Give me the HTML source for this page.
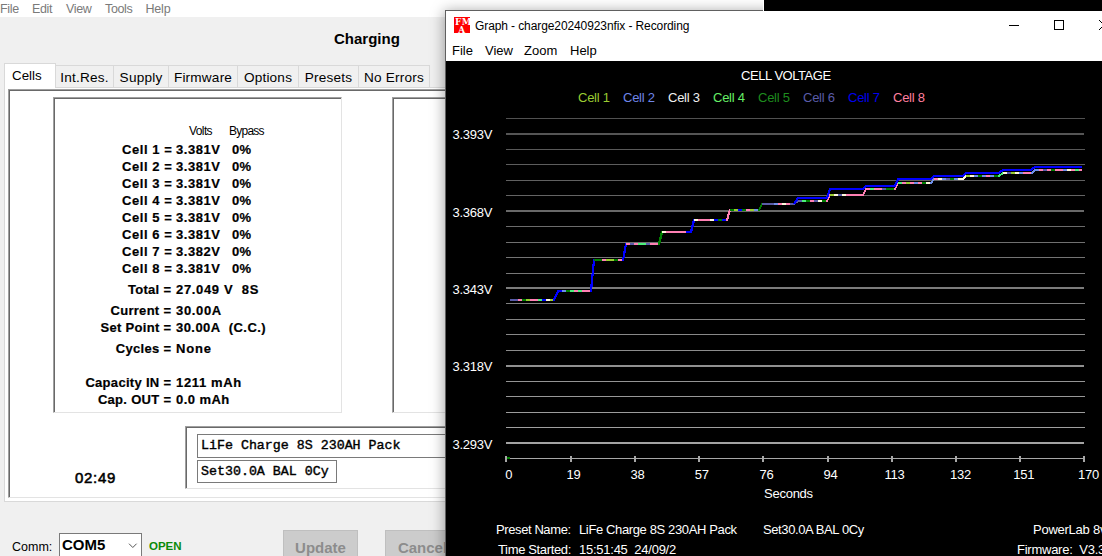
<!DOCTYPE html>
<html><head><meta charset="utf-8">
<style>
html,body{margin:0;padding:0;}
body{width:1102px;height:556px;overflow:hidden;position:relative;background:#f0f0f0;font-family:"Liberation Sans",sans-serif;color:#000;}
.a{position:absolute;white-space:nowrap;}
.menu{font-size:12.5px;color:#7a7a7a;top:1px;line-height:17px;letter-spacing:-0.35px;}
.tab{top:66px;height:21px;border-right:1px solid #d9d9d9;font-size:13.6px;letter-spacing:0.2px;line-height:23px;text-align:center;box-sizing:border-box;background:#f0f0f0;}
.cell{font-weight:bold;font-size:13px;letter-spacing:0.3px;line-height:17px;-webkit-text-stroke:0.2px #000;}
.v{letter-spacing:0.55px}
.sk{background:#fff;border:1px solid #a0a0a0;border-right-color:#e3e3e3;border-bottom-color:#e3e3e3;box-shadow:inset 1px 1px 0 #696969;box-sizing:border-box}
.g{color:#fff;font-size:13px;letter-spacing:-0.25px;}
.xl{top:466px;line-height:17px;transform:translateX(-50%);}
</style></head><body>
<!-- main window -->
<div class="a" style="left:0;top:0;width:763px;height:17px;background:#fff"></div>
<div class="a menu" style="left:0px">File</div>
<div class="a menu" style="left:32px">Edit</div>
<div class="a menu" style="left:66px">View</div>
<div class="a menu" style="left:105px">Tools</div>
<div class="a menu" style="left:145.5px;letter-spacing:-0.2px">Help</div>
<div class="a" style="left:334px;top:29.5px;font-size:15px;font-weight:bold;line-height:18px">Charging</div>

<!-- tabs -->
<div class="a" style="left:55px;top:65px;width:375px;height:1px;background:#d9d9d9"></div>
<div class="a tab" style="left:56px;width:58px">Int.Res.</div>
<div class="a tab" style="left:114px;width:55px">Supply</div>
<div class="a tab" style="left:169px;width:69px">Firmware</div>
<div class="a tab" style="left:238px;width:61px">Options</div>
<div class="a tab" style="left:299px;width:60px">Presets</div>
<div class="a tab" style="left:359px;width:71px">No Errors</div>
<div class="a" style="left:4px;top:87px;width:770px;height:415px;background:#fff;border:1px solid #d9d9d9;box-sizing:border-box"></div>
<div class="a" style="left:4px;top:63px;width:52px;height:25px;border:1px solid #d9d9d9;border-bottom:none;background:#fff;box-sizing:border-box;font-size:13.33px;line-height:23px;text-align:left;padding-left:7px">Cells</div>

<!-- panel -->
<div class="a sk" style="left:8px;top:89px;width:770px;height:409px;"></div>
<div class="a sk" style="left:53px;top:97px;width:289px;height:316px;"></div>
<div class="a sk" style="left:392px;top:97px;width:289px;height:316px;"></div>

<div class="a" style="left:189px;top:124px;font-size:12px;letter-spacing:-0.6px">Volts</div>
<div class="a" style="left:229px;top:124px;font-size:12px;letter-spacing:-0.75px">Bypass</div>
<div class="a cell v" style="right:929.6px;top:141px">Cell 1 =</div><div class="a cell v" style="left:176px;top:141px">3.381V</div><div class="a cell" style="left:232px;top:141px">0%</div>
<div class="a cell v" style="right:929.6px;top:158px">Cell 2 =</div><div class="a cell v" style="left:176px;top:158px">3.381V</div><div class="a cell" style="left:232px;top:158px">0%</div>
<div class="a cell v" style="right:929.6px;top:175px">Cell 3 =</div><div class="a cell v" style="left:176px;top:175px">3.381V</div><div class="a cell" style="left:232px;top:175px">0%</div>
<div class="a cell v" style="right:929.6px;top:192px">Cell 4 =</div><div class="a cell v" style="left:176px;top:192px">3.381V</div><div class="a cell" style="left:232px;top:192px">0%</div>
<div class="a cell v" style="right:929.6px;top:209px">Cell 5 =</div><div class="a cell v" style="left:176px;top:209px">3.381V</div><div class="a cell" style="left:232px;top:209px">0%</div>
<div class="a cell v" style="right:929.6px;top:226px">Cell 6 =</div><div class="a cell v" style="left:176px;top:226px">3.381V</div><div class="a cell" style="left:232px;top:226px">0%</div>
<div class="a cell v" style="right:929.6px;top:243px">Cell 7 =</div><div class="a cell v" style="left:176px;top:243px">3.382V</div><div class="a cell" style="left:232px;top:243px">0%</div>
<div class="a cell v" style="right:929.6px;top:260px">Cell 8 =</div><div class="a cell v" style="left:176px;top:260px">3.381V</div><div class="a cell" style="left:232px;top:260px">0%</div>
<div class="a cell" style="right:930.7px;top:281px">Total =</div><div class="a cell" style="left:176px;top:281px;letter-spacing:0.65px">27.049 V&nbsp; 8S</div>
<div class="a cell" style="right:930.7px;top:302px">Current =</div><div class="a cell" style="left:176px;top:302px;letter-spacing:0.65px">30.00A</div>
<div class="a cell" style="right:930.7px;top:319px">Set Point =</div><div class="a cell" style="left:176px;top:319px;letter-spacing:0.45px">30.00A&nbsp; (C.C.)</div>
<div class="a cell" style="right:930.7px;top:340px">Cycles =</div><div class="a cell" style="left:176px;top:340px;letter-spacing:0.8px">None</div>
<div class="a cell" style="right:930.7px;top:374px">Capacity IN =</div><div class="a cell" style="left:176px;top:374px;letter-spacing:0.65px">1211 mAh</div>
<div class="a cell" style="right:930.7px;top:391px">Cap. OUT =</div><div class="a cell" style="left:176px;top:391px;letter-spacing:0.45px">0.0 mAh</div>

<!-- preset box -->
<div class="a sk" style="left:185px;top:426px;width:500px;height:63px"></div>
<div class="a" style="left:197px;top:434px;width:400px;height:24px;border:1px solid #7a7a7a;box-sizing:border-box;font-family:'Liberation Mono',monospace;font-size:13.3px;-webkit-text-stroke:0.4px #000;line-height:21px;padding-left:3px">LiFe Charge 8S 230AH Pack</div>
<div class="a" style="left:197px;top:460px;width:140px;height:23px;border:1px solid #7a7a7a;box-sizing:border-box;font-family:'Liberation Mono',monospace;font-size:13.3px;-webkit-text-stroke:0.4px #000;line-height:22px;padding-left:3px">Set30.0A BAL 0Cy</div>
<div class="a" style="left:75px;top:469px;font-size:15px;line-height:18px;letter-spacing:0.7px;-webkit-text-stroke:0.55px #000">02:49</div>

<!-- bottom -->
<div class="a" style="left:12px;top:538px;font-size:12.5px;line-height:18px">Comm:</div>
<div class="a" style="left:59px;top:533px;width:83px;height:26px;border:1px solid #7a7a7a;background:#fff;box-sizing:border-box;font-size:15px;font-weight:bold;line-height:21px;padding-left:2px">COM5</div>
<svg class="a" style="left:128px;top:543px" width="10" height="6"><path d="M1 0.7 L4.8 4.5 L8.6 0.7" fill="none" stroke="#555" stroke-width="1"/></svg>
<div class="a" style="left:149px;top:538px;font-size:11.5px;font-weight:bold;color:#0a8a0a;line-height:16px">OPEN</div>
<div class="a" style="left:283px;top:530px;width:75px;height:30px;background:#cccccc;border:1px solid #bfbfbf;box-sizing:border-box;font-size:15px;font-weight:bold;color:#8c8c8c;text-align:center;line-height:33px">Update</div>
<div class="a" style="left:385px;top:530px;width:75px;height:30px;background:#cccccc;border:1px solid #bfbfbf;box-sizing:border-box;font-size:15px;font-weight:bold;color:#8c8c8c;text-align:center;line-height:33px">Cancel</div>

<!-- graph window -->
<div class="a" style="left:445px;top:10px;width:670px;height:560px;background:#000;border-left:1px solid #606060;border-top:1px solid #606060;box-sizing:border-box;box-shadow:0 2px 13px 1px rgba(0,0,0,0.36)"></div>
<div class="a" style="left:763px;top:0;width:339px;height:11px;background:#000;border-left:1px solid #fff;box-sizing:border-box"></div>
<div class="a" style="left:446px;top:11px;width:656px;height:50px;background:#fff"></div>
<!-- icon -->
<div class="a" style="left:454px;top:17px;width:16px;height:16px;background:#fe0000;overflow:hidden;color:#fff;font-family:'DejaVu Serif',serif;font-weight:bold;font-size:8.8px;line-height:8px">
<div class="a" style="left:1px;top:1px;letter-spacing:0.4px">FM</div>
<div class="a" style="left:4.2px;top:8.6px;">A</div>
</div>
<div class="a" style="left:475px;top:17px;font-size:12px;letter-spacing:-0.1px;line-height:18px;">Graph - charge20240923nfix - Recording</div>
<div class="a" style="left:1009px;top:25px;width:10px;height:1px;background:#000"></div>
<div class="a" style="left:1054px;top:20px;width:10px;height:10px;border:1px solid #000;box-sizing:border-box"></div>
<svg class="a" style="left:1099px;top:20px" width="10" height="10"><path d="M0 0 L10 10 M0 10 L10 0" stroke="#000" stroke-width="1"/></svg>
<div class="a" style="left:452px;top:42px;font-size:13px;line-height:18px">File</div>
<div class="a" style="left:485px;top:42px;font-size:13px;line-height:18px">View</div>
<div class="a" style="left:524px;top:42px;font-size:13px;line-height:18px">Zoom</div>
<div class="a" style="left:570px;top:42px;font-size:13px;line-height:18px">Help</div>

<div class="a g" style="left:741px;top:67px;line-height:17px;letter-spacing:-0.45px">CELL VOLTAGE</div>
<div class="a g" style="left:578px;top:89px;line-height:17px;color:#9acd32">Cell 1</div>
<div class="a g" style="left:623px;top:89px;line-height:17px;color:#6f86e8">Cell 2</div>
<div class="a g" style="left:668px;top:89px;line-height:17px;color:#f0f0f0">Cell 3</div>
<div class="a g" style="left:713px;top:89px;line-height:17px;color:#66ee66">Cell 4</div>
<div class="a g" style="left:758px;top:89px;line-height:17px;color:#1e8c1e">Cell 5</div>
<div class="a g" style="left:803px;top:89px;line-height:17px;color:#5a5ca8">Cell 6</div>
<div class="a g" style="left:848px;top:89px;line-height:17px;color:#0000ee">Cell 7</div>
<div class="a g" style="left:893px;top:89px;line-height:17px;color:#ff7f9f">Cell 8</div>

<svg class="a" style="left:0;top:0" width="1102" height="556" shape-rendering="crispEdges">
<rect x="506" y="118" width="579" height="1" fill="#515151"/>
<rect x="506" y="149" width="579" height="1" fill="#595959"/>
<rect x="506" y="164" width="579" height="1" fill="#5d5d5d"/>
<rect x="506" y="180" width="579" height="1" fill="#616161"/>
<rect x="506" y="195" width="579" height="1" fill="#646464"/>
<rect x="506" y="226" width="579" height="1" fill="#6c6c6c"/>
<rect x="506" y="242" width="579" height="1" fill="#707070"/>
<rect x="506" y="257" width="579" height="1" fill="#747474"/>
<rect x="506" y="273" width="579" height="1" fill="#787878"/>
<rect x="506" y="303" width="579" height="1" fill="#808080"/>
<rect x="506" y="319" width="579" height="1" fill="#848484"/>
<rect x="506" y="334" width="579" height="1" fill="#888888"/>
<rect x="506" y="350" width="579" height="1" fill="#8c8c8c"/>
<rect x="506" y="381" width="579" height="1" fill="#949494"/>
<rect x="506" y="396" width="579" height="1" fill="#989898"/>
<rect x="506" y="412" width="579" height="1" fill="#9c9c9c"/>
<rect x="506" y="427" width="579" height="1" fill="#9f9f9f"/>
<rect x="506" y="133" width="578" height="2" fill="#555555"/>
<rect x="506" y="210" width="578" height="2" fill="#696969"/>
<rect x="506" y="287" width="578" height="2" fill="#7c7c7c"/>
<rect x="506" y="365" width="578" height="2" fill="#909090"/>
<rect x="506" y="442" width="578" height="2" fill="#a3a3a3"/>
<rect x="506" y="458" width="579" height="1" fill="#a7a7a7"/>
<rect x="505" y="456" width="2" height="6" fill="#a7a7a7"/>
<rect x="570" y="456" width="2" height="6" fill="#a7a7a7"/>
<rect x="634" y="456" width="2" height="6" fill="#a7a7a7"/>
<rect x="698" y="456" width="2" height="6" fill="#a7a7a7"/>
<rect x="762" y="456" width="2" height="6" fill="#a7a7a7"/>
<rect x="827" y="456" width="2" height="6" fill="#a7a7a7"/>
<rect x="891" y="456" width="2" height="6" fill="#a7a7a7"/>
<rect x="955" y="456" width="2" height="6" fill="#a7a7a7"/>
<rect x="1019" y="456" width="2" height="6" fill="#a7a7a7"/>
<rect x="1083" y="456" width="2" height="6" fill="#a7a7a7"/>
<rect x="507" y="457" width="3" height="2" fill="#008000"/>
<rect x="510" y="299" width="8" height="2" fill="#5a5ca8"/>
<rect x="518" y="299" width="4" height="2" fill="#ff80b4"/>
<rect x="522" y="299" width="4" height="2" fill="#008000"/>
<rect x="526" y="299" width="4" height="2" fill="#9acd32"/>
<rect x="530" y="299" width="8" height="2" fill="#ff80b4"/>
<rect x="538" y="299" width="4" height="2" fill="#4cf07c"/>
<rect x="542" y="299" width="4" height="2" fill="#0000ff"/>
<rect x="546" y="299" width="4" height="2" fill="#fff8dc"/>
<rect x="550" y="299" width="4" height="2" fill="#9acd32"/>
<path d="M554 300 L558 291" stroke="#0000ff" stroke-width="2.2" fill="none" stroke-linecap="square"/>
<rect x="558" y="290" width="4" height="2" fill="#0000ff"/>
<rect x="562" y="290" width="4" height="2" fill="#6f8fe8"/>
<rect x="566" y="290" width="4" height="2" fill="#008000"/>
<rect x="570" y="290" width="4" height="2" fill="#4cf07c"/>
<rect x="574" y="290" width="4" height="2" fill="#ff80b4"/>
<rect x="578" y="290" width="4" height="2" fill="#4cf07c"/>
<rect x="582" y="290" width="8" height="2" fill="#ff80b4"/>
<rect x="590" y="290" width="1" height="2" fill="#0000ff"/>
<path d="M591 291 L594 260" stroke="#0000ff" stroke-width="2.2" fill="none" stroke-linecap="square"/>
<rect x="594" y="259" width="8" height="2" fill="#008000"/>
<rect x="602" y="259" width="4" height="2" fill="#ff80b4"/>
<rect x="606" y="259" width="8" height="2" fill="#9acd32"/>
<rect x="614" y="259" width="4" height="2" fill="#008000"/>
<rect x="618" y="259" width="4" height="2" fill="#ff80b4"/>
<rect x="622" y="259" width="1" height="2" fill="#0000ff"/>
<path d="M623 260 L626 244" stroke="#0000ff" stroke-width="2.2" fill="none" stroke-linecap="square"/>
<rect x="626" y="243" width="4" height="2" fill="#ff80b4"/>
<rect x="630" y="243" width="4" height="2" fill="#5a5ca8"/>
<rect x="634" y="243" width="4" height="2" fill="#ff80b4"/>
<rect x="638" y="243" width="8" height="2" fill="#4cf07c"/>
<rect x="646" y="243" width="4" height="2" fill="#5a5ca8"/>
<rect x="650" y="243" width="8" height="2" fill="#ff80b4"/>
<rect x="658" y="243" width="1" height="2" fill="#008000"/>
<path d="M659 244 L662 232" stroke="#008000" stroke-width="2.2" fill="none" stroke-linecap="square"/>
<rect x="662" y="231" width="4" height="2" fill="#fff8dc"/>
<rect x="666" y="231" width="20" height="2" fill="#ff80b4"/>
<rect x="686" y="231" width="5" height="2" fill="#0000ff"/>
<path d="M691 232 L694 220" stroke="#0000ff" stroke-width="2.2" fill="none" stroke-linecap="square"/>
<rect x="694" y="219" width="4" height="2" fill="#fff8dc"/>
<rect x="698" y="219" width="12" height="2" fill="#ff80b4"/>
<rect x="710" y="219" width="4" height="2" fill="#fff8dc"/>
<rect x="714" y="219" width="4" height="2" fill="#0000ff"/>
<rect x="718" y="219" width="4" height="2" fill="#008000"/>
<rect x="722" y="219" width="4" height="2" fill="#0000ff"/>
<rect x="726" y="219" width="1" height="2" fill="#ff80b4"/>
<path d="M727 220 L730 210" stroke="#ff80b4" stroke-width="2.2" fill="none" stroke-linecap="square"/>
<rect x="730" y="209" width="4" height="2" fill="#008000"/>
<rect x="734" y="209" width="4" height="2" fill="#9acd32"/>
<rect x="738" y="209" width="4" height="2" fill="#0000ff"/>
<rect x="742" y="209" width="4" height="2" fill="#008000"/>
<rect x="746" y="209" width="4" height="2" fill="#ff80b4"/>
<rect x="750" y="209" width="4" height="2" fill="#9acd32"/>
<rect x="754" y="209" width="4" height="2" fill="#6f8fe8"/>
<rect x="758" y="209" width="1" height="2" fill="#008000"/>
<path d="M759 210 L762 204" stroke="#008000" stroke-width="2.2" fill="none" stroke-linecap="square"/>
<rect x="762" y="203" width="12" height="2" fill="#5a5ca8"/>
<rect x="774" y="203" width="4" height="2" fill="#6f8fe8"/>
<rect x="778" y="203" width="4" height="2" fill="#ff80b4"/>
<rect x="782" y="203" width="4" height="2" fill="#fff8dc"/>
<rect x="786" y="203" width="4" height="2" fill="#ff80b4"/>
<rect x="790" y="203" width="5" height="2" fill="#5a5ca8"/>
<path d="M794 204 L798 201" stroke="#5a5ca8" stroke-width="2" fill="none" stroke-linecap="square"/>
<rect x="798" y="200" width="4" height="2" fill="#5a5ca8"/>
<rect x="802" y="200" width="4" height="2" fill="#4cf07c"/>
<rect x="806" y="200" width="4" height="2" fill="#008000"/>
<rect x="810" y="200" width="4" height="2" fill="#ff80b4"/>
<rect x="814" y="200" width="4" height="2" fill="#5a5ca8"/>
<rect x="818" y="200" width="4" height="2" fill="#fff8dc"/>
<rect x="822" y="200" width="4" height="2" fill="#008000"/>
<rect x="826" y="200" width="1" height="2" fill="#ff80b4"/>
<path d="M827 201 L830 195" stroke="#ff80b4" stroke-width="2" fill="none" stroke-linecap="square"/>
<rect x="830" y="194" width="4" height="2" fill="#9acd32"/>
<rect x="834" y="194" width="4" height="2" fill="#fff8dc"/>
<rect x="838" y="194" width="4" height="2" fill="#5a5ca8"/>
<rect x="842" y="194" width="4" height="2" fill="#fff8dc"/>
<rect x="846" y="194" width="17" height="2" fill="#ff80b4"/>
<path d="M863 195 L866 189" stroke="#ff80b4" stroke-width="2" fill="none" stroke-linecap="square"/>
<rect x="866" y="188" width="4" height="2" fill="#ff80b4"/>
<rect x="870" y="188" width="4" height="2" fill="#4cf07c"/>
<rect x="874" y="188" width="8" height="2" fill="#ff80b4"/>
<rect x="882" y="188" width="4" height="2" fill="#5a5ca8"/>
<rect x="886" y="188" width="8" height="2" fill="#008000"/>
<rect x="894" y="188" width="1" height="2" fill="#ff80b4"/>
<path d="M895 189 L898 183" stroke="#ff80b4" stroke-width="2" fill="none" stroke-linecap="square"/>
<rect x="898" y="182" width="4" height="2" fill="#4cf07c"/>
<rect x="902" y="182" width="4" height="2" fill="#ff80b4"/>
<rect x="906" y="182" width="4" height="2" fill="#9acd32"/>
<rect x="910" y="182" width="4" height="2" fill="#ff80b4"/>
<rect x="914" y="182" width="4" height="2" fill="#6f8fe8"/>
<rect x="918" y="182" width="4" height="2" fill="#ff80b4"/>
<rect x="922" y="182" width="4" height="2" fill="#008000"/>
<rect x="926" y="182" width="5" height="2" fill="#fff8dc"/>
<path d="M931 183 L934 179" stroke="#6f8fe8" stroke-width="2" fill="none" stroke-linecap="square"/>
<rect x="934" y="178" width="4" height="2" fill="#ff80b4"/>
<rect x="938" y="178" width="4" height="2" fill="#fff8dc"/>
<rect x="942" y="178" width="4" height="2" fill="#6f8fe8"/>
<rect x="946" y="178" width="4" height="2" fill="#5a5ca8"/>
<rect x="950" y="178" width="4" height="2" fill="#008000"/>
<rect x="954" y="178" width="4" height="2" fill="#6f8fe8"/>
<rect x="958" y="178" width="5" height="2" fill="#fff8dc"/>
<path d="M963 179 L966 176" stroke="#fff8dc" stroke-width="2" fill="none" stroke-linecap="square"/>
<rect x="966" y="175" width="4" height="2" fill="#9acd32"/>
<rect x="970" y="175" width="4" height="2" fill="#fff8dc"/>
<rect x="974" y="175" width="4" height="2" fill="#6f8fe8"/>
<rect x="978" y="175" width="4" height="2" fill="#008000"/>
<rect x="982" y="175" width="4" height="2" fill="#6f8fe8"/>
<rect x="986" y="175" width="4" height="2" fill="#ff80b4"/>
<rect x="990" y="175" width="4" height="2" fill="#6f8fe8"/>
<rect x="994" y="175" width="5" height="2" fill="#008000"/>
<path d="M999 176 L1003 173" stroke="#4cf07c" stroke-width="2" fill="none" stroke-linecap="square"/>
<rect x="1003" y="172" width="4" height="2" fill="#fff8dc"/>
<rect x="1007" y="172" width="4" height="2" fill="#5a5ca8"/>
<rect x="1011" y="172" width="4" height="2" fill="#9acd32"/>
<rect x="1015" y="172" width="4" height="2" fill="#fff8dc"/>
<rect x="1019" y="172" width="4" height="2" fill="#6f8fe8"/>
<rect x="1023" y="172" width="9" height="2" fill="#ff80b4"/>
<path d="M1032 173 L1035 170" stroke="#6f8fe8" stroke-width="2" fill="none" stroke-linecap="square"/>
<rect x="1035" y="169" width="4" height="2" fill="#6f8fe8"/>
<rect x="1039" y="169" width="4" height="2" fill="#ff80b4"/>
<rect x="1043" y="169" width="4" height="2" fill="#5a5ca8"/>
<rect x="1047" y="169" width="4" height="2" fill="#ff80b4"/>
<rect x="1051" y="169" width="4" height="2" fill="#008000"/>
<rect x="1055" y="169" width="8" height="2" fill="#ff80b4"/>
<rect x="1063" y="169" width="4" height="2" fill="#6f8fe8"/>
<rect x="1067" y="169" width="4" height="2" fill="#fff8dc"/>
<rect x="1071" y="169" width="4" height="2" fill="#ff80b4"/>
<rect x="1075" y="169" width="4" height="2" fill="#4cf07c"/>
<rect x="1079" y="169" width="3" height="2" fill="#ff80b4"/>
<path d="M794 204 L798 198 L827 198 L830 189 L863 189 L866 186 L895 186 L898 179 L931 179 L934 176 L963 176 L966 173 L999 173 L1003 170 L1031 170 L1035 167 L1082 167" stroke="#0000ff" stroke-width="2.2" fill="none" stroke-linejoin="miter"/>
</svg>

<div class="a g" style="left:452.5px;top:126px;line-height:17px">3.393V</div>
<div class="a g" style="left:452.5px;top:204px;line-height:17px">3.368V</div>
<div class="a g" style="left:452.5px;top:281px;line-height:17px">3.343V</div>
<div class="a g" style="left:452.5px;top:358px;line-height:17px">3.318V</div>
<div class="a g" style="left:452.5px;top:436px;line-height:17px">3.293V</div>
<div class="a g xl" style="left:508.8px;">0</div>
<div class="a g xl" style="left:573.6px;">19</div>
<div class="a g xl" style="left:637.6px;">38</div>
<div class="a g xl" style="left:701.8px;">57</div>
<div class="a g xl" style="left:766.6px;">76</div>
<div class="a g xl" style="left:830.6px;">94</div>
<div class="a g xl" style="left:894.6px;">113</div>
<div class="a g xl" style="left:960.6px;">132</div>
<div class="a g xl" style="left:1023.8px;">151</div>
<div class="a g xl" style="left:1088.6px;">170</div>
<div class="a g" style="left:764px;top:485px;line-height:17px">Seconds</div>
<div class="a g" style="left:496px;top:521px;line-height:17px;letter-spacing:-0.4px">Preset Name:</div>
<div class="a g" style="left:579px;top:521px;line-height:17px;letter-spacing:-0.37px">LiFe Charge 8S 230AH Pack</div>
<div class="a g" style="left:763px;top:521px;line-height:17px;letter-spacing:-0.4px">Set30.0A BAL 0Cy</div>
<div class="a g" style="left:1033px;top:521px;line-height:17px">PowerLab 8v2</div>
<div class="a g" style="left:498px;top:541px;line-height:17px;letter-spacing:-0.35px">Time Started:</div>
<div class="a g" style="left:579px;top:541px;line-height:17px">15:51:45&nbsp; 24/09/2</div>
<div class="a g" style="left:1017px;top:541px;line-height:17px">Firmware:&nbsp; V3.3</div>

</body></html>
